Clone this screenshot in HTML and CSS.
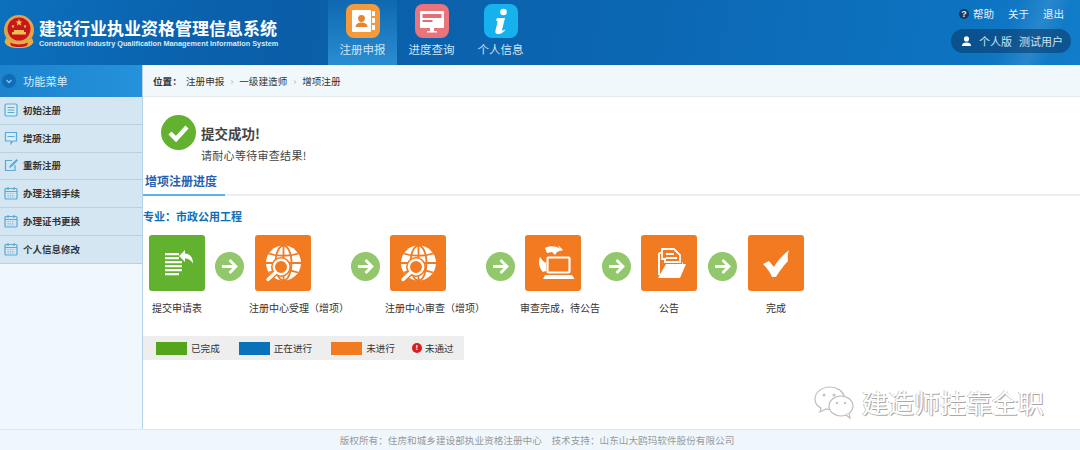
FILE: index.html
```html
<!DOCTYPE html>
<html lang="zh-CN">
<head>
<meta charset="utf-8">
<title>建设行业执业资格管理信息系统</title>
<link rel="stylesheet" href="styles.css">
</head>
<body>
<svg class="defs" width="0" height="0" aria-hidden="true">
  <defs>
    <symbol id="globe" viewBox="0 0 56 56">
      <circle cx="28.500" cy="28" r="17.500" fill="#fff"/>
      <g fill="none" stroke="#f27a21" stroke-width="1.800">
        <ellipse cx="28.500" cy="28" rx="8" ry="17.500"/>
        <path d="M28.500 10v36M14 18.500c8 3 21 3 29 0M11 28h35M14 37.500c8-3 21-3 29 0"/>
      </g>
      <circle cx="26" cy="32" r="10" fill="#f27a21"/>
      <circle cx="26" cy="32" r="7.200" fill="#f27a21" stroke="#fff" stroke-width="2.400"/>
      <path d="M20.500 37.500 12 45.500" stroke="#f27a21" stroke-width="6"/>
      <path d="M20.500 37.500 13 44.500" stroke="#fff" stroke-width="3.400" stroke-linecap="round"/>
    </symbol>
    <symbol id="calendar" viewBox="0 0 14 14">
      <rect x="1" y="2.500" width="12" height="10.500" rx="1" fill="none" stroke="#5aa9d6" stroke-width="1.200"/>
      <path d="M1 5.500h12M4 1v3M10 1v3" stroke="#5aa9d6" stroke-width="1.200"/>
      <path d="M3.500 7.500h7M3.500 9.500h7M3.500 11h7" stroke="#7cbde0" stroke-width=".9" stroke-dasharray="1.300 1"/>
    </symbol>
    <symbol id="arrow" viewBox="0 0 29 29">
      <circle cx="14.500" cy="14.500" r="14.500" fill="#92c76c"/>
      <path d="M7 14.500h13M14.500 8l6.500 6.500-6.500 6.500" fill="none" stroke="#fff" stroke-width="2.800"/>
    </symbol>
  </defs>
</svg>

<div class="page">
  <header class="top">
    <div class="brand">
      <svg class="emblem" viewBox="0 0 32 34" width="32" height="34">
        <circle cx="16" cy="15" r="15" fill="#e2a34c"/>
        <circle cx="16" cy="14" r="11.500" fill="#c8161d"/>
        <path d="M16 4l1 2.500h2.500l-2 1.600.8 2.600-2.300-1.500-2.300 1.500.8-2.600-2-1.600H15zM10 9.500l.5 1.200 1.200.1-.9.8.3 1.200-1.100-.6-1.100.6.3-1.200-.9-.8 1.200-.1zM22 9.500l.5 1.200 1.200.1-.9.8.3 1.200-1.100-.6-1.100.6.3-1.200-.9-.8 1.200-.1z" fill="#f3c842"/>
        <path d="M9 17h14v2.500H9zM11 15h10v2H11z" fill="#efbf52"/>
        <path d="M3 23c5 5 21 5 26 0l1.500 4c-2 4-6 6-14.500 6S3.500 31 1.500 27z" fill="#e8ac48"/>
        <path d="M7 27.500c5 2.500 13 2.500 18 0l-1 3c-5 2-11 2-16 0z" fill="#c8161d"/>
      </svg>
      <div class="brand-text">
        <div class="brand-cn">建设行业执业资格管理信息系统</div>
        <div class="brand-en">Construction Industry Qualification Management Information System</div>
      </div>
    </div>
    <nav class="nav">
      <a class="nav-item active">
        <span class="nav-icon orange">
          <svg viewBox="0 0 34 34" width="34" height="34">
            <rect x="6" y="6" width="19" height="22" rx="1" fill="#fff"/>
            <rect x="26" y="7" width="3" height="5" fill="#fff"/><rect x="26" y="14" width="3" height="5" fill="#fff"/><rect x="26" y="21" width="3" height="5" fill="#fff"/>
            <circle cx="15.500" cy="14.500" r="3.400" fill="#e8852c"/>
            <path d="M9.500 23c.5-3.500 3-4.500 6-4.500s5.500 1 6 4.500z" fill="#e8852c"/>
          </svg>
        </span>
        <span>注册申报</span>
      </a>
      <a class="nav-item">
        <span class="nav-icon rose">
          <svg viewBox="0 0 34 34" width="34" height="34">
            <rect x="5" y="7" width="24" height="17" rx="1" fill="#fff"/>
            <rect x="7.500" y="10" width="19" height="4" fill="#e46e78"/>
            <rect x="7.500" y="16" width="10" height="2" fill="#e46e78"/>
            <path d="M15 24h4v3h3v1.500H12V27h3z" fill="#fff"/>
          </svg>
        </span>
        <span>进度查询</span>
      </a>
      <a class="nav-item">
        <span class="nav-icon cyan">
          <svg viewBox="0 0 34 34" width="34" height="34">
            <circle cx="19.500" cy="8" r="3.300" fill="#fff"/>
            <path d="M13 14h8l-3 12c-.2 1 .6 1 2.500-.5l.5 1c-3 3-5 3.500-7 3.500-2.500 0-3-1.500-2.500-3.500l2-8.500c.2-1-.5-1.200-1.500-1.200z" fill="#fff"/>
          </svg>
        </span>
        <span>个人信息</span>
      </a>
    </nav>
    <div class="user-area">
      <div class="links">
        <span class="help-dot">?</span><a class="link-help">帮助</a><a>关于</a><a>退出</a>
      </div>
      <div class="user-pill">
        <svg viewBox="0 0 12 12" width="11" height="11">
          <circle cx="6" cy="3.200" r="2.800" fill="#fff"/>
          <path d="M1 11c0-3 2-4 5-4s5 1 5 4z" fill="#fff"/>
        </svg>
        <span>个人版</span><span>测试用户</span>
      </div>
    </div>
  </header>

  <div class="middle">
    <aside class="side">
      <div class="side-title">
        <span class="side-dot">
          <svg viewBox="0 0 14 14" width="14" height="14"><path d="M4.500 6 7 8.500 9.500 6" fill="none" stroke="#7fc4ee" stroke-width="1.400"/></svg>
        </span>
        <span>功能菜单</span>
      </div>
      <ul class="menu">
        <li>
          <svg viewBox="0 0 14 14" width="14" height="14"><rect x="1" y="1" width="12" height="12" rx="1.500" fill="#d9edf8" stroke="#5aa9d6" stroke-width="1.200"/><path d="M3.500 4.500h7M3.500 7h7M3.500 9.500h7" stroke="#5aa9d6"/></svg>
          初始注册
        </li>
        <li>
          <svg viewBox="0 0 14 14" width="14" height="14"><path d="M1.500 1.500h11v8.500H9l-2 2.500V10H1.500z" fill="#d9edf8" stroke="#5aa9d6" stroke-width="1.200"/><path d="M3.500 5.500h7" stroke="#5aa9d6"/></svg>
          增项注册
        </li>
        <li>
          <svg viewBox="0 0 14 14" width="14" height="14"><path d="M11 7v5.500H1.500V2.500H8" fill="none" stroke="#5aa9d6" stroke-width="1.200"/><path d="M12.500 1 6 7.500 5 10l2.500-1L14 2.500z" fill="#5aa9d6"/></svg>
          重新注册
        </li>
        <li><svg width="14" height="14"><use href="#calendar"/></svg>办理注销手续</li>
        <li><svg width="14" height="14"><use href="#calendar"/></svg>办理证书更换</li>
        <li><svg width="14" height="14"><use href="#calendar"/></svg>个人信息修改</li>
      </ul>
    </aside>

    <main class="main">
      <div class="crumbs">
        <b>位置：</b>
        <span>注册申报</span><i>›</i><span>一级建造师</span><i>›</i><span>增项注册</span>
      </div>

      <section class="success">
        <svg viewBox="0 0 35 35" width="35" height="35">
          <circle cx="17.500" cy="17.500" r="17.500" fill="#63b22f"/>
          <path d="M9 18l6 6 11-12" fill="none" stroke="#fff" stroke-width="4.400"/>
        </svg>
        <div class="success-text">
          <div class="success-title">提交成功!</div>
          <div class="success-sub">请耐心等待审查结果!</div>
        </div>
      </section>

      <div class="tabs"><span class="tab">增项注册进度</span></div>

      <div class="major">专业：市政公用工程</div>

      <div class="flow">
        <div class="step">
          <span class="tile green">
            <svg viewBox="0 0 56 56" width="56" height="56">
              <path d="M16 18h14v2.200H16zM16 22h14v2.200H16zM16 26h17v2.200H16zM16 30h17v2.200H16zM16 34h17v2.200H16zM16 38h14v2.200H16z" fill="#fff"/>
              <path d="M30 21l6-6v3.500c5 .5 8 4 8 10-2-3.500-4.500-5-8-5V27z" fill="#fff"/>
            </svg>
          </span>
          <span class="step-label">提交申请表</span>
        </div>
        <svg class="arrow a-first" width="29" height="29"><use href="#arrow"/></svg>
        <div class="step">
          <span class="tile orange-tile"><svg width="56" height="56"><use href="#globe"/></svg></span>
          <span class="step-label shift-a">注册中心受理（增项）</span>
        </div>
        <svg class="arrow a-far" width="29" height="29"><use href="#arrow"/></svg>
        <div class="step">
          <span class="tile orange-tile"><svg width="56" height="56"><use href="#globe"/></svg></span>
          <span class="step-label shift-b">注册中心审查（增项）</span>
        </div>
        <svg class="arrow a-far" width="29" height="29"><use href="#arrow"/></svg>
        <div class="step">
          <span class="tile orange-tile">
            <svg viewBox="0 0 56 56" width="56" height="56">
              <path d="M20 13c5-3 13-2 17 2l-5 2-2 3-3-3-5 1zM15 22c-2 5-1 11 3 15l3-1v-8l-3-2zM33 10l5 5-2 1z" fill="#fff"/>
              <rect x="22.500" y="22.500" width="22" height="15" rx="1" fill="none" stroke="#fff" stroke-width="2.200"/>
              <path d="M20 40h27l2.500 4H18z" fill="#fff"/>
            </svg>
          </span>
          <span class="step-label shift-c">审查完成，待公告</span>
        </div>
        <svg class="arrow a-mid" width="29" height="29"><use href="#arrow"/></svg>
        <div class="step">
          <span class="tile orange-tile">
            <svg viewBox="0 0 56 56" width="56" height="56">
              <path d="M21 14h12l6 6v7H24v-3h-3z" fill="none" stroke="#fff" stroke-width="1.800"/>
              <path d="M25 19h8M25 23h11" stroke="#fff" stroke-width="1.800"/>
              <path d="M18 18v22M18 18h3" stroke="#fff" stroke-width="2" fill="none"/>
              <path d="M25 29h16l1-3 0 3h3l-6 14H17z" fill="#fff"/>
            </svg>
          </span>
          <span class="step-label">公告</span>
        </div>
        <svg class="arrow a-last" width="29" height="29"><use href="#arrow"/></svg>
        <div class="step">
          <span class="tile orange-tile">
            <svg viewBox="0 0 56 56" width="56" height="56">
              <path d="M15 29l6-3 5 6c3-6 8-11 15-17-2 6-1 8-1 11-4 4-9 11-12 16h-4c-2-5-5-9-9-13z" fill="#fff"/>
            </svg>
          </span>
          <span class="step-label">完成</span>
        </div>
      </div>

      <div class="legend">
        <span class="swatch s-green"></span><span class="legend-text">已完成</span>
        <span class="swatch s-blue"></span><span class="legend-text">正在进行</span>
        <span class="swatch s-orange"></span><span class="legend-text">未进行</span>
        <span class="bang">!</span><span class="legend-text">未通过</span>
      </div>
    </main>
  </div>

  <footer class="foot">版权所有：住房和城乡建设部执业资格注册中心　技术支持：山东山大鸥玛软件股份有限公司</footer>

  <div class="watermark">
    <svg viewBox="0 0 42 36" width="42" height="36">
      <path d="M17 3C9 3 2 8 2 15c0 4 2 7 6 9l-1 4 6-3c2 .5 3 .5 4 .5" fill="#fff" stroke="#bdbdbd" stroke-width="1.200"/>
      <path d="M17 3c7 0 13 4 14.500 10" fill="none" stroke="#bdbdbd" stroke-width="1.200"/>
      <ellipse cx="28" cy="22" rx="12" ry="10" fill="#fff" stroke="#bdbdbd" stroke-width="1.200"/>
      <path d="M33 31l4 3-1-5" fill="#fff" stroke="#bdbdbd" stroke-width="1.200"/>
      <circle cx="11" cy="11" r="1.500" fill="#c4c4c4"/><circle cx="21" cy="11" r="1.500" fill="#c4c4c4"/>
      <circle cx="24" cy="19" r="1.200" fill="#c4c4c4"/><circle cx="32" cy="19" r="1.200" fill="#c4c4c4"/>
    </svg>
    <span>建造师挂靠全职</span>
  </div>
</div>
</body>
</html>
```
FILE: styles.css
```css
* { box-sizing: border-box; }
html, body { margin: 0; padding: 0; }
body {
  font-family: "Noto Sans CJK SC", "Liberation Sans", sans-serif;
  background: #fff;
  color: #333;
}
.defs { position: absolute; }
.page {
  position: relative;
  width: 1080px;
  height: 450px;
  display: flex;
  flex-direction: column;
  overflow: hidden;
}

/* header */
.top {
  height: 65px;
  flex: none;
  display: flex;
  color: #fff;
  background:
    linear-gradient(112deg, transparent 92%, rgba(255, 255, 255, 0.1) 95%, transparent 97%),
    linear-gradient(100deg, #0c70bd 0%, #0a60ab 20%, #0b5ea8 30%, #0c67b3 60%, #0d74c2 90%, #127dca 100%);
}
.brand {
  width: 328px;
  display: flex;
  align-items: flex-start;
  padding: 15px 0 0 3px;
}
.emblem { flex: none; }
.brand-text { margin-left: 4px; }
.brand-cn {
  font-size: 17px;
  line-height: 20px;
  margin-top: 3px;
  font-weight: 700;
  white-space: nowrap;
}
.brand-en {
  font-family: "Liberation Sans", sans-serif;
  font-size: 7.300px;
  line-height: 9px;
  margin-top: 1px;
  font-weight: 700;
  color: #d8e9f6;
  white-space: nowrap;
}
.nav { display: flex; width: 207px; }
.nav-item {
  width: 69px;
  display: flex;
  flex-direction: column;
  align-items: center;
  padding-top: 4px;
  font-size: 11.500px;
  line-height: 17px;
  color: #cfe6f6;
}
.nav-item.active { background: linear-gradient(#0f68b0, #2a8dd2); }
.nav-icon {
  width: 34px;
  height: 34px;
  border-radius: 8px;
  margin-bottom: 3px;
  display: block;
}
.nav-icon svg { display: block; }
.orange { background: #f39a3c; }
.rose { background: #e9747c; }
.cyan { background: #16b2ee; }
.user-area {
  margin-left: auto;
  width: 129px;
  padding: 6px 9px 0 0;
  display: flex;
  flex-direction: column;
  align-items: flex-end;
}
.links {
  display: flex;
  align-items: center;
  font-size: 10.500px;
  line-height: 16px;
  padding-right: 7px;
  gap: 14px;
  color: #e6f2fb;
}
.help-dot {
  width: 10px;
  height: 10px;
  border-radius: 50%;
  background: #0d3a66;
  font: 700 9px/10px "Liberation Sans", sans-serif;
  text-align: center;
  margin-right: -10px;
}
.user-pill {
  margin-top: 7px;
  width: 120px;
  height: 24px;
  border-radius: 12px;
  background: rgba(10, 55, 100, 0.55);
  display: flex;
  align-items: center;
  padding-left: 10px;
  gap: 7px;
  font-size: 11px;
  color: #cfe3f2;
}

/* body */
.middle { flex: 1; display: flex; min-height: 0; }
.side {
  width: 143px;
  flex: none;
  background: #f0f8fd;
  border-right: 1px solid #b4d3e8;
}
.side-title {
  height: 32px;
  background: linear-gradient(90deg, #1c83cc, #2592dc);
  color: #d8eefb;
  font-size: 11.200px;
  display: flex;
  align-items: center;
  padding-left: 2px;
  gap: 7px;
}
.side-dot {
  width: 14px;
  height: 14px;
  border-radius: 50%;
  background: #0f6db5;
}
.side-dot svg { display: block; }
.menu { list-style: none; margin: 0; padding: 0; }
.menu li {
  height: 27.800px;
  display: flex;
  align-items: center;
  gap: 5px;
  padding: 0 0 1px 4px;
  background: #d3e6f2;
  border-bottom: 1px solid #b9d0de;
  font-size: 9.500px;
  font-weight: 700;
  color: #333;
}
.menu svg { flex: none; }

.main { flex: 1; min-width: 0; display: flex; flex-direction: column; }
.crumbs {
  height: 32px;
  flex: none;
  background: #f1f8fc;
  border-bottom: 1px solid #e4ebef;
  display: flex;
  align-items: center;
  padding-left: 10px;
  font-size: 9.600px;
  color: #333;
}
.crumbs b { width: 33px; font-weight: 700; }
.crumbs i { font-style: normal; color: #aaa; margin: 0 6px; }

.success {
  display: flex;
  padding: 18px 0 0 18px;
  height: 67px;
  flex: none;
}
.success-text { margin-left: 5px; padding-top: 8px; }
.success-title { font-size: 13.500px; line-height: 20px; font-weight: 700; color: #444; }
.success-sub { font-size: 11px; line-height: 16px; color: #444; margin-top: 4px; letter-spacing: 0.3px; }

.tabs {
  height: 32px;
  flex: none;
  border-bottom: 2px solid #eceff1;
  display: flex;
}
.tab {
  width: 82px;
  height: 32px;
  padding: 9px 0 0 2px;
  border-bottom: 2px solid #5cb5e6;
  font-size: 12px;
  font-weight: 700;
  line-height: 16px;
  color: #2a5fb0;
}
.major {
  font-size: 11px;
  font-weight: 700;
  color: #0f6fb2;
  line-height: 16px;
  margin-top: 12px;
}

.flow {
  display: flex;
  padding: 11px 0 0 6px;
  align-items: flex-start;
  flex: none;
}
.step {
  width: 56px;
  display: flex;
  flex-direction: column;
  align-items: center;
}
.tile { width: 56px; height: 56px; border-radius: 3px; display: block; }
.tile svg { display: block; }
.green { background: #63b22f; }
.orange-tile { background: #f27a21; }
.step-label {
  margin-top: 9px;
  font-size: 10px;
  line-height: 16px;
  white-space: nowrap;
  color: #333;
}
.shift-a { margin-left: 32px; }
.shift-b { margin-left: 34px; }
.shift-c { margin-left: 14px; }
.arrow { margin-top: 17px; flex: none; }
.a-first { margin-left: 10px; margin-right: 11px; }
.a-far { margin-left: 40px; margin-right: 10px; }
.a-mid { margin-left: 21px; margin-right: 10px; }
.a-last { margin-left: 11px; margin-right: 11px; }

.legend {
  margin-top: 20px;
  width: 321px;
  height: 24px;
  background: #eee;
  display: flex;
  align-items: center;
  padding-left: 13px;
  font-size: 9.600px;
  color: #333;
}
.swatch { width: 31px; height: 13px; margin-right: 4px; }
.s-green { background: #55a51c; }
.s-blue { background: #0a72b8; margin-left: 19px; }
.s-orange { background: #f27a21; margin-left: 19px; }
.legend-text { white-space: nowrap; }
.bang {
  width: 10px;
  height: 10px;
  margin: 0 3px 0 17px;
  border-radius: 50%;
  background: #d81e1e;
  color: #fff;
  font: 700 8px/10px "Liberation Sans", sans-serif;
  text-align: center;
}

.foot {
  height: 21px;
  flex: none;
  background: #eff7fd;
  border-top: 1px solid #dfe8ee;
  font-size: 9.650px;
  line-height: 21px;
  color: #999;
  text-align: center;
  padding-right: 6px;
}

/* photo watermark laid over the page */
.watermark {
  position: absolute;
  left: 813px;
  top: 384px;
  display: flex;
  align-items: center;
  gap: 7px;
  font-size: 26px;
  line-height: 36px;
  color: #fff;
  text-shadow: 1px 1px 0 #a9a9a9, -1px 0 0 #c9c9c9;
}
```
